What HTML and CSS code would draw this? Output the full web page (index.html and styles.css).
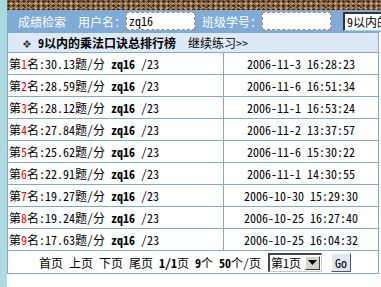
FILE: index.html
```html
<!DOCTYPE html>
<html lang="zh-CN">
<head>
<meta charset="utf-8">
<title>9以内的乘法口诀总排行榜</title>
<link rel="stylesheet" href="styles.css">
</head>
<body>
<div class="page">
  <div class="side"></div>
  <div class="main">
    <div class="texture"></div>
    <div class="searchbar">
      <span class="lbl first">成绩检索</span>
      <span class="lbl">用户名：</span>
      <span class="field">zq16</span>
      <span class="lbl mid">班级学号：</span>
      <span class="field"></span>
      <span class="combo">9以内的乘法口诀</span>
    </div>
    <table class="rank">
      <tr class="head">
        <td colspan="2"><span class="dia">❖</span><b class="title">9以内的乘法口诀总排行榜</b><span class="more">继续练习&gt;&gt;</span></td>
      </tr>
      <tr><td class="c1">第<span class="n">1</span>名:30.13题/分 <b>zq16</b> /23</td><td class="c2">2006-11-3 16:28:23</td></tr>
      <tr><td class="c1">第<span class="n">2</span>名:28.59题/分 <b>zq16</b> /23</td><td class="c2">2006-11-6 16:51:34</td></tr>
      <tr><td class="c1">第<span class="n">3</span>名:28.12题/分 <b>zq16</b> /23</td><td class="c2">2006-11-1 16:53:24</td></tr>
      <tr><td class="c1">第<span class="n">4</span>名:27.84题/分 <b>zq16</b> /23</td><td class="c2">2006-11-2 13:37:57</td></tr>
      <tr><td class="c1">第<span class="n">5</span>名:25.62题/分 <b>zq16</b> /23</td><td class="c2">2006-11-6 15:30:22</td></tr>
      <tr><td class="c1">第<span class="n">6</span>名:22.91题/分 <b>zq16</b> /23</td><td class="c2">2006-11-1 14:30:55</td></tr>
      <tr><td class="c1">第<span class="n">7</span>名:19.27题/分 <b>zq16</b> /23</td><td class="c2">2006-10-30 15:29:30</td></tr>
      <tr><td class="c1">第<span class="n">8</span>名:19.24题/分 <b>zq16</b> /23</td><td class="c2">2006-10-25 16:27:40</td></tr>
      <tr><td class="c1">第<span class="n">9</span>名:17.63题/分 <b>zq16</b> /23</td><td class="c2">2006-10-25 16:04:32</td></tr>
      <tr class="pager">
        <td colspan="2">
          <div class="pagebox">
            <span>首页 上页 下页 尾页 <b>1/1</b>页 <b>9</b>个 <b>50</b>个/页</span>
            <span class="sel"><span class="seltext">第1页</span><span class="arrow"><svg width="9" height="5" viewBox="0 0 9 5"><path d="M0 0H9L4.5 5Z" fill="#000"/></svg></span></span>
            <span class="go">Go</span>
          </div>
        </td>
      </tr>
    </table>
  </div>
</div>
</body>
</html>
```
FILE: styles.css
```css
html, body {
  margin: 0;
  padding: 0;
  background: #fff;
}
body {
  font-family: "Noto Sans Mono CJK SC", "Noto Sans CJK SC", sans-serif;
  font-size: 12px;
  color: #000;
}
.page {
  display: flex;
  width: 381px;
  height: 287px;
  overflow: hidden;
}
.side {
  width: 7px;
  flex: none;
  background-color: #fff;
  background-image:
    radial-gradient(circle, #a9d8e0 0.7px, transparent 0.8px),
    linear-gradient(#a6dccb 0, #b3e0d2 55px, #e4f1f4 70px, #f4f9fb 287px);
  background-size: 2px 2px, 100% 100%;
}
.main {
  flex: 1;
  display: flex;
  flex-direction: column;
}
.texture {
  height: 10px;
  background-color: #9a7550;
  background-image:
    radial-gradient(circle at 30% 40%, #3a2a18 1px, transparent 1.5px),
    radial-gradient(circle at 70% 70%, #caa57a 1px, transparent 1.5px),
    radial-gradient(circle at 50% 20%, #5b4428 1px, transparent 1.4px);
  background-size: 5px 4px, 6px 5px, 7px 6px;
}
.searchbar {
  height: 22px;
  background: #80abd6;
  display: flex;
  align-items: center;
  color: #fff;
  white-space: nowrap;
}
.lbl.first { margin-left: 11px; margin-right: 12px; }
.lbl.mid { margin-left: 7px; }
.field {
  box-sizing: border-box;
  width: 69px;
  height: 18px;
  background: #fff;
  border: 1px dashed #b08a5a;
  color: #000;
  padding-left: 2px;
  line-height: 16px;
}
.combo {
  box-sizing: border-box;
  margin-left: 12px;
  height: 19px;
  width: 50px;
  background: #fff;
  color: #000;
  border-top: 2px solid #333;
  border-left: 2px solid #333;
  border-bottom: 1px solid #9fd8d8;
  padding-left: 2px;
  line-height: 16px;
  overflow: hidden;
  flex: none;
}
.rank {
  border-collapse: collapse;
  width: 372px;
  border: 1px solid #7fa8d3;
}
.rank td {
  border: 1px solid #7fa8d3;
  padding: 0;
  height: 21px;
  white-space: nowrap;
}
.head td {
  background: #dde9f5;
  height: 19px;
}
.dia {
  font-family: "DejaVu Sans", sans-serif;
  color: #444;
  margin-left: 14px;
  margin-right: 6px;
  font-size: 11px;
}
.title { font-weight: bold; }
.more { margin-left: 12px; }
.c1 {
  width: 214px;
  padding-left: 1px !important;
}
.c2 {
  text-align: center;
}
.n { color: #f00; }
.pager td {
  height: 22px;
}
.pagebox {
  display: flex;
  align-items: center;
  justify-content: center;
  padding-left: 4px;
}
.sel {
  box-sizing: border-box;
  display: inline-flex;
  align-items: center;
  margin-left: 7px;
  width: 54px;
  height: 19px;
  border-top: 2px solid #444;
  border-left: 2px solid #444;
  border-right: 1px solid #ccc;
  border-bottom: 1px solid #ccc;
  background: #fff;
}
.seltext { flex: 1; padding-left: 1px; line-height: 16px; }
.arrow {
  width: 15px;
  height: 14px;
  background: #d6d3ce;
  border-top: 1px solid #fff;
  border-left: 1px solid #fff;
  border-right: 1px solid #404040;
  border-bottom: 1px solid #404040;
  box-sizing: border-box;
  display: flex;
  align-items: center;
  justify-content: center;
  margin-right: 1px;
}
.go {
  box-sizing: border-box;
  margin-left: 9px;
  width: 20px;
  height: 19px;
  background: #dce8f4;
  border-top: 1px solid #fff;
  border-left: 1px solid #fff;
  border-right: 1px solid #555;
  border-bottom: 1px solid #555;
  display: flex;
  align-items: center;
  justify-content: center;
  font-size: 12px;
}
```
